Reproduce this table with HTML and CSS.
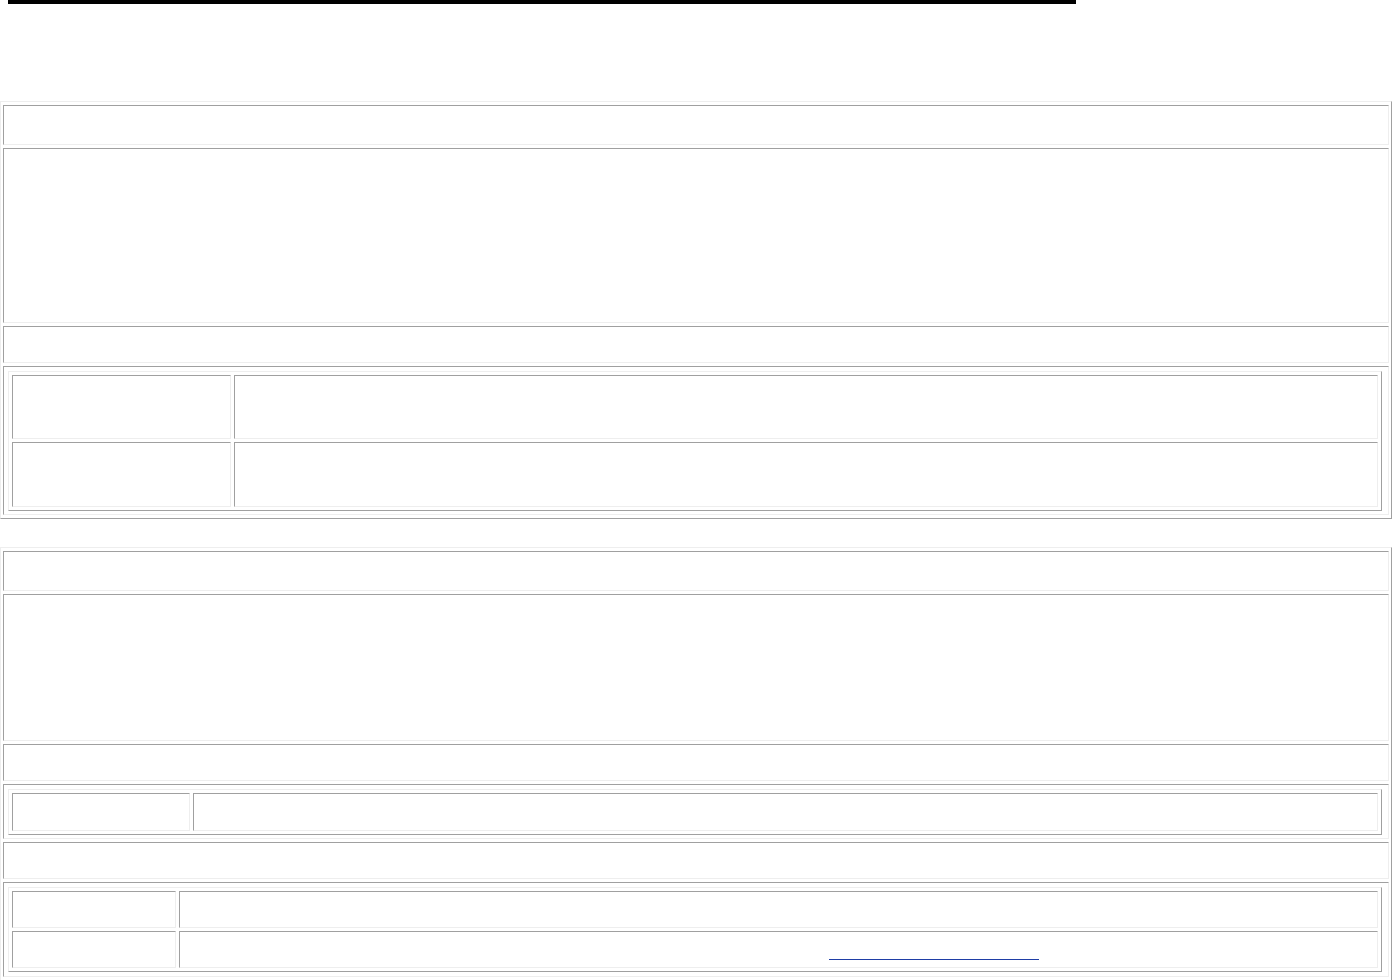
FILE: index.html
```html
<!DOCTYPE html>
<html>

<head>
	<title>Details</title>
	<link rel="stylesheet" href="styles.css">
</head>

<body>
	<div class="top-bar"></div>

	<table class="panel">
		<tr>
			<td class="row-head"></td>
		</tr>
		<tr>
			<td class="row-body tall"></td>
		</tr>
		<tr>
			<td class="row-sub"></td>
		</tr>
		<tr>
			<td class="row-nest">
				<table class="inner">
					<tr>
						<td class="label wide"></td>
						<td class="value big"></td>
					</tr>
					<tr>
						<td class="label wide"></td>
						<td class="value big-last"></td>
					</tr>
				</table>
			</td>
		</tr>
	</table>

	<table class="panel second">
		<tr>
			<td class="row-head"></td>
		</tr>
		<tr>
			<td class="row-body"></td>
		</tr>
		<tr>
			<td class="row-sub"></td>
		</tr>
		<tr>
			<td class="row-nest">
				<table class="inner">
					<tr>
						<td class="label mid"></td>
						<td class="value single"></td>
					</tr>
				</table>
			</td>
		</tr>
		<tr>
			<td class="row-sub"></td>
		</tr>
		<tr>
			<td class="row-nest loose">
				<table class="inner">
					<tr>
						<td class="label narrow"></td>
						<td class="value small"></td>
					</tr>
					<tr>
						<td class="label narrow"></td>
						<td class="value small link-cell"><a class="ref-link" href="#"></a></td>
					</tr>
				</table>
			</td>
		</tr>
	</table>
</body>

</html>
```

FILE: styles.css
```css
* {
	margin: 0px;
	padding: 0px;
}

body {
	background: #ffffff;
	font-family: "Liberation Serif", serif;
	font-size: 16px;
}

.top-bar {
	width: 1068px;
	height: 4px;
	margin-left: 8px;
	margin-bottom: 97px;
	background: #000000;
}

/* old style bevelled tables */
.panel {
	width: 1392px;
	border-collapse: separate;
	border-spacing: 2px 3px;
	border: 1px solid;
	border-color: #eeeeee #a0a0a0 #a0a0a0 #eeeeee;
}

.second {
	margin-top: 28px;
}

.panel td {
	box-sizing: border-box;
	border: 1px solid;
	border-color: #a0a0a0 #eeeeee #eeeeee #a0a0a0;
	padding: 0px;
}

.row-head {
	height: 40px;
}

.row-body {
	height: 147px;
}

.tall {
	height: 175px;
}

.row-sub {
	height: 37px;
}

.panel .row-nest {
	padding: 4px 6px 3px 4px;
}

.panel .loose {
	padding: 4px 6px 4px 4px;
}

.inner {
	width: 100%;
	table-layout: fixed;
	border-collapse: separate;
	border-spacing: 3px;
	border: 1px solid;
	border-color: #eeeeee #a0a0a0 #a0a0a0 #eeeeee;
}

.wide {
	width: 219px;
}

.mid {
	width: 178px;
}

.narrow {
	width: 164px;
}

.big {
	height: 64px;
}

.big-last {
	height: 65px;
}

.single {
	height: 38px;
}

.small {
	height: 37px;
}

.panel .link-cell {
	vertical-align: top;
}

.ref-link {
	display: block;
	width: 210px;
	height: 0px;
	margin: 27px 0px 0px 649px;
	border-bottom: 1px solid #1f3ea6;
}
```
